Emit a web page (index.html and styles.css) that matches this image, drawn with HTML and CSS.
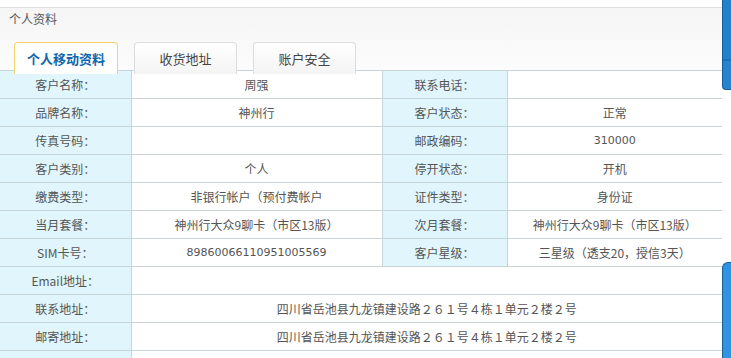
FILE: index.html
```html
<!DOCTYPE html>
<html lang="zh-CN">
<head>
<meta charset="utf-8">
<title>个人资料</title>
<link rel="stylesheet" href="styles.css">
</head>
<body>
<div class="page">
  <div class="main">
    <div class="panel-head">
      <div class="title">个人资料</div>
      <div class="tabs">
        <div class="tab active">个人移动资料</div>
        <div class="tab">收货地址</div>
        <div class="tab">账户安全</div>
      </div>
    </div>
    <table class="info">
      <colgroup>
        <col class="c1"><col class="c2"><col class="c3"><col class="c4">
      </colgroup>
      <tr><td class="lbl">客户名称：</td><td>周强</td><td class="lbl">联系电话：</td><td></td></tr>
      <tr><td class="lbl">品牌名称：</td><td>神州行</td><td class="lbl">客户状态：</td><td>正常</td></tr>
      <tr><td class="lbl">传真号码：</td><td></td><td class="lbl">邮政编码：</td><td class="num">310000</td></tr>
      <tr><td class="lbl">客户类别：</td><td>个人</td><td class="lbl">停开状态：</td><td>开机</td></tr>
      <tr><td class="lbl">缴费类型：</td><td>非银行帐户（预付费帐户</td><td class="lbl">证件类型：</td><td>身份证</td></tr>
      <tr><td class="lbl">当月套餐：</td><td>神州行大众9聊卡（市区13版）</td><td class="lbl">次月套餐：</td><td>神州行大众9聊卡（市区13版）</td></tr>
      <tr><td class="lbl">SIM卡号：</td><td class="num">89860066110951005569</td><td class="lbl">客户星级：</td><td>三星级（透支20，授信3天）</td></tr>
      <tr><td class="lbl">Email地址：</td><td colspan="3"></td></tr>
      <tr><td class="lbl">联系地址：</td><td colspan="3">四川省岳池县九龙镇建设路２６１号４栋１单元２楼２号</td></tr>
      <tr><td class="lbl">邮寄地址：</td><td colspan="3">四川省岳池县九龙镇建设路２６１号４栋１单元２楼２号</td></tr>
      <tr><td class="lbl"></td><td colspan="3"></td></tr>
    </table>
  </div>
  <div class="side">
    <div class="blue-top"></div>
    <div class="blue-bottom"></div>
  </div>
</div>
</body>
</html>
```
FILE: styles.css
```css
html, body {
  margin: 0;
  padding: 0;
  background: #ffffff;
}
body {
  font-family: "Noto Sans CJK SC", "Liberation Sans", sans-serif;
  font-size: 12px;
  color: #555555;
  overflow: hidden;
}
.page {
  display: flex;
  width: 731px;
  height: 358px;
}
.main {
  width: 722px;
  padding-top: 7px;
}
.panel-head {
  border-top: 1px solid #dddddd;
  background: linear-gradient(#f5f5f5, #fcfcfc);
  height: 63px;
  box-sizing: border-box;
}
.title {
  padding: 3px 0 0 9px;
  line-height: 16px;
  height: 19px;
  color: #555;
}
.tabs {
  display: flex;
  gap: 16px;
  padding-left: 14px;
  margin-top: 12px;
}
.tab {
  width: 103px;
  height: 32px;
  box-sizing: border-box;
  border: 1px solid #dcdcdc;
  border-bottom: none;
  border-radius: 4px 4px 0 0;
  background: linear-gradient(#ffffff, #f4f4f4);
  font-size: 13px;
  color: #444;
  display: flex;
  align-items: center;
  justify-content: center;
}
.tab.active {
  width: 104px;
  border-color: #f1d46c;
  background: #ffffff;
  color: #0d67ad;
  font-weight: bold;
}
.info {
  width: 722px;
  border-collapse: collapse;
  table-layout: fixed;
}
.c1 { width: 131px; }
.c2 { width: 251px; }
.c3 { width: 125px; }
.c4 { width: 215px; }
.info td {
  height: 27px;
  padding: 0;
  border: 1px solid #c9d4d9;
  text-align: center;
  vertical-align: middle;
  white-space: nowrap;
  overflow: hidden;
  line-height: 14px;
}
.info tr td:first-child { border-left: none; }
.info tr td:last-child { border-right: none; }
.info td.lbl {
  background: #e0f6fc;
}
.info td.num {
  font-family: "DejaVu Sans", sans-serif;
  font-size: 11px;
}
.side {
  width: 9px;
  display: flex;
  flex-direction: column;
  justify-content: space-between;
}
.blue-top {
  height: 90px;
  background: linear-gradient(#2181cc 0, #2181cc 59px, #17609a 60px, #2583cf 61px);
  border-left: 1px solid #155e98;
  border-bottom: 1px solid #155e98;
  border-radius: 0 0 0 4px;
  box-sizing: border-box;
}
.blue-bottom {
  height: 96px;
  background: #2f93e3;
  border-left: 1px solid #1a5f94;
  border-top: 1px solid #1a5f94;
  border-radius: 6px 0 0 0;
  box-sizing: border-box;
}
```
